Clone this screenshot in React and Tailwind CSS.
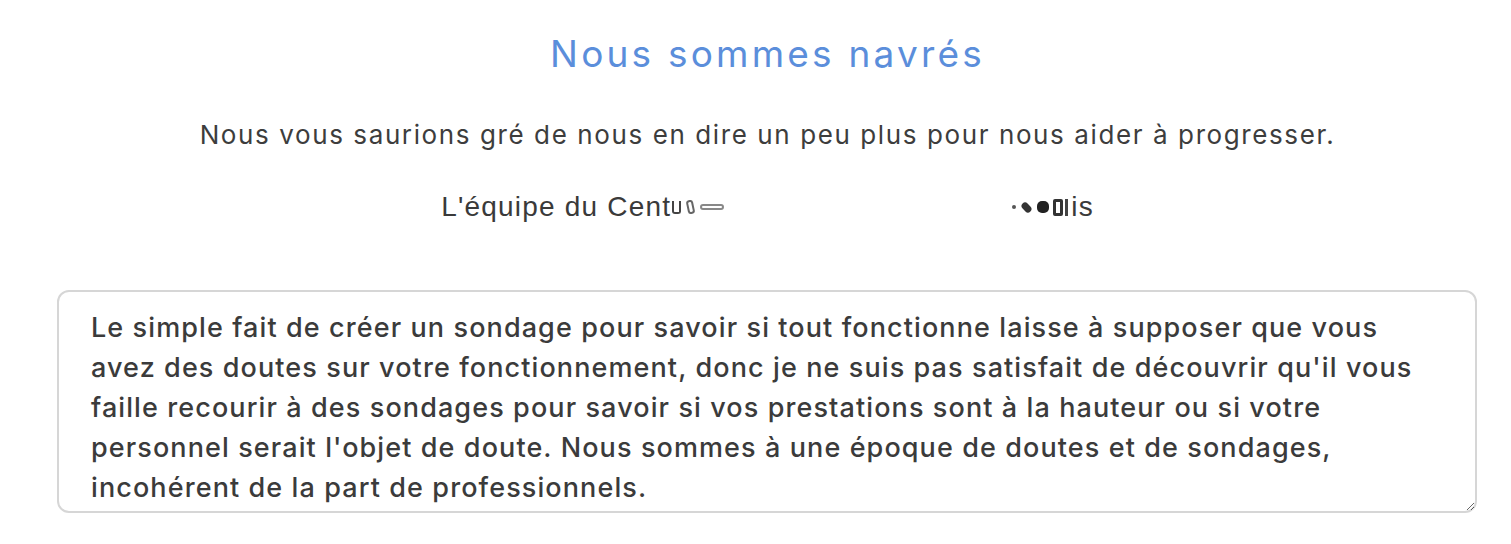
import { useState } from "react";

const comment = [
  "Le simple fait de créer un sondage pour savoir si tout fonctionne laisse à supposer que vous",
  "avez des doutes sur votre fonctionnement, donc je ne suis pas satisfait de découvrir qu'il vous",
  "faille recourir à des sondages pour savoir si vos prestations sont à la hauteur ou si votre",
  "personnel serait l'objet de doute. Nous sommes à une époque de doutes et de sondages,",
  "incohérent de la part de professionnels.",
].join("\n");

export default function App() {
  const [text, setText] = useState(comment);

  return (
    <div className="min-h-[544px] w-full bg-white font-['Inter',sans-serif]">
      <div className="flex flex-col items-center pl-[24px] pt-[30px]">
        <h1 className="text-[37px] leading-[48px] font-normal tracking-[3.2px] text-[#5b8edb]">
          Nous sommes navrés
        </h1>
        <p className="mt-[40px] text-[26px] leading-[34px] text-[#3d3d3d] tracking-[1.6px]">
          Nous vous saurions gré de nous en dire un peu plus pour nous aider à progresser.
        </p>
        {/* signature, partly blurred in the source */}
        <p className="mt-[38px] flex items-center font-['Liberation_Sans',sans-serif] text-[28px] leading-[34px] tracking-[1.2px] text-[#3a3a3a]">
          <span>L'équipe du Cent</span>
          <span className="ml-[1px] inline-block h-[13px] w-[9px] rounded-b-[3px] border-2 border-t-0 border-[#444]" />
          <span className="ml-[6px] inline-block h-[14px] w-[7px] -rotate-12 rounded-[3px] border-2 border-[#666]" />
          <span className="ml-[6px] inline-block h-[6px] w-[24px] rounded-full border-2 border-[#888]" />
          <span className="inline-block w-[288px]" />
          <span className="inline-block h-[4px] w-[4px] rounded-full bg-[#555]" />
          <span className="ml-[5px] inline-block h-[7px] w-[11px] rotate-45 rounded-full bg-[#333]" />
          <span className="ml-[5px] inline-block h-[12px] w-[12px] rounded-[5px] bg-[#222]" />
          <span className="ml-[4px] inline-block h-[17px] w-[10px] rounded-[2px] border-[3px] border-[#333]" />
          <span className="ml-[2px] inline-block h-[17px] w-[3px] bg-[#444]" />
          <span className="ml-[3px]">is</span>
        </p>
      </div>
      <div className="mt-[66px] ml-[57px] mr-[34px]">
        <textarea
          value={text}
          onChange={(e) => setText(e.target.value)}
          wrap="off"
          className="block h-[223px] w-full resize overflow-hidden rounded-[12px] border-2 border-[#d6d6d6] bg-white px-[32px] pt-[16px] text-[27px] font-medium leading-[40px] tracking-[1.1px] text-[#3b3b3b] outline-none"
        />
      </div>
    </div>
  );
}
